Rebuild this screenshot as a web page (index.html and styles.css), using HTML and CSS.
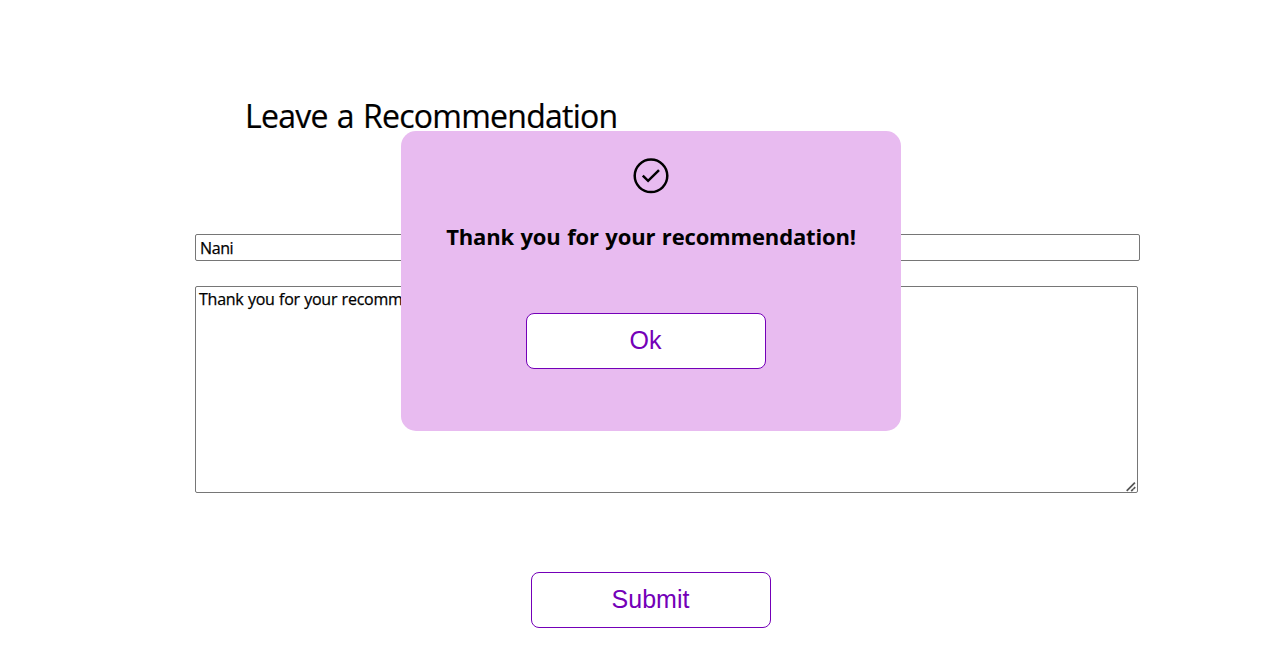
FILE: index.html
```html
<!DOCTYPE html>
<html lang="en">
<head>
<meta charset="utf-8">
<title>Leave a Recommendation</title>
<link rel="stylesheet" href="styles.css">
</head>
<body>
<main class="recommend">
  <h1 class="title"><span>Leave a Recommendation</span></h1>
  <form class="form">
    <input class="field name" type="text" value="Nani">
    <div class="message-box">
      <textarea class="field message">Thank you for your recommendation</textarea>
      <svg class="grip" viewBox="0 0 10 10" stroke="#555" stroke-width="1.7" fill="none">
        <path d="M.7 8.9L8.9.7M5.2 9.2l2-2M7.4 7l1.8-1.8"/>
      </svg>
    </div>
    <button class="btn submit" type="button">Submit</button>
  </form>
</main>
<div class="popup" role="dialog">
  <svg class="check" viewBox="0 0 36 36" fill="none" stroke="#000" stroke-width="2.5">
    <circle cx="18" cy="17.8" r="16.3"/>
    <path d="M9.8 17.6l5.3 5.2L26 12.2"/>
  </svg>
  <h3 class="thanks"><span>Thank you for your recommendation!</span></h3>
  <button class="btn ok" type="button">Ok</button>
</div>
</body>
</html>
```
FILE: styles.css
```css
* { box-sizing: border-box; }
body {
  margin: 0;
  height: 653px;
  overflow: hidden;
  background: #fff;
  color: #000;
  font-family: "Trebuchet MS", "Open Sans", sans-serif;
}
.recommend { padding: 96px 0 0 195px; }
.title {
  margin: 0 0 98px 50px;
  font-size: 32px;
  font-weight: 400;
  line-height: 39px;
  height: 40px;
  white-space: nowrap;
  letter-spacing: -0.75px;
  word-spacing: 1.6px;
  -webkit-text-stroke: 0.2px #000;
}
.form {
  display: flex;
  flex-direction: column;
  align-items: flex-start;
}
.field {
  display: block;
  margin: 0;
  border: 1px solid #767676;
  border-radius: 2px;
  background: #fff;
  color: #000;
  font-family: inherit;
  font-size: 16px;
  -webkit-text-stroke: 0.25px #000;
  outline: none;
}
.name {
  width: 945px;
  height: 27px;
  padding: 1px 3px 1px 4px;
  letter-spacing: -0.4px;
}
.message-box {
  position: relative;
  margin-top: 25px;
}
.message {
  width: 943px;
  height: 207px;
  padding: 2px 3px;
  line-height: 20px;
  letter-spacing: -0.25px;
  word-spacing: 0.5px;
  resize: none;
}
.grip {
  position: absolute;
  right: 2px;
  bottom: 1px;
  width: 10px;
  height: 10px;
}
.btn {
  width: 240px;
  height: 56px;
  padding: 0 1px 2px 0;
  border: 1px solid #7400b8;
  border-radius: 8px;
  background: #fff;
  color: #7400b8;
  font-family: "Liberation Sans", Arial, sans-serif;
  font-size: 25px;
}
.submit { margin: 79px 0 0 336px; }
.popup {
  position: absolute;
  top: 131px;
  left: 401px;
  width: 500px;
  height: 300px;
  border-radius: 15px;
  background: #e8bbf0;
  display: flex;
  flex-direction: column;
  align-items: center;
}
.check {
  width: 36px;
  height: 36px;
  margin-top: 27px;
}
.thanks {
  margin: 27px 0 0;
  font-size: 22px;
  font-weight: 700;
  line-height: 30px;
  letter-spacing: -0.16px;
  word-spacing: 1px;
  white-space: nowrap;
}
.ok { margin: 62px 10px 0 0; }
```
